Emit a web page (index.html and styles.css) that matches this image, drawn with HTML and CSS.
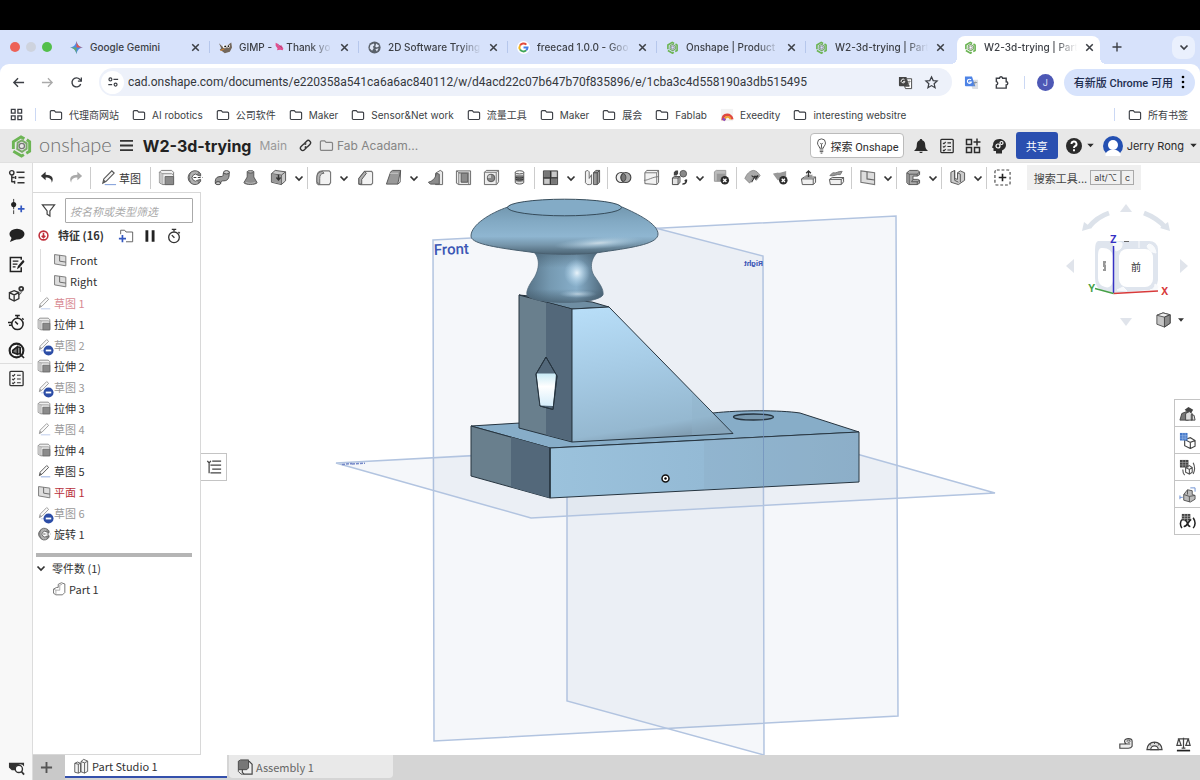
FILE: index.html
```html
<!DOCTYPE html>
<html lang="zh-CN">
<head>
<meta charset="utf-8">
<title>W2-3d-trying | Part Studio 1</title>
<link rel="stylesheet" href="styles.css">
</head>
<body>
<svg class="sprite" aria-hidden="true">
  <symbol id="close" viewBox="0 0 12 12"><path d="M3 3l6 6M9 3l-6 6" stroke="currentColor" stroke-width="1.4" fill="none"/></symbol>
  <symbol id="chev" viewBox="0 0 12 12"><path d="M2.500 4.500L6 8l3.500-3.500" stroke="currentColor" stroke-width="1.700" fill="none"/></symbol>
  <symbol id="caret" viewBox="0 0 12 12"><path d="M2.500 4h7L6 8z" fill="currentColor"/></symbol>
  <symbol id="folder" viewBox="0 0 16 16"><path d="M1.500 4.200a1.200 1.200 0 0 1 1.200-1.200h3.300l1.600 1.700h5.600a1.200 1.200 0 0 1 1.200 1.200v6a1.200 1.200 0 0 1-1.200 1.200H2.700a1.200 1.200 0 0 1-1.200-1.200z" fill="none" stroke="currentColor" stroke-width="1.300"/></symbol>
  <symbol id="onshape" viewBox="0 0 24 24"><path d="M3.500 15V7.500L11.500 2.500 15 4.500M17.500 5.500l3 2v10L17 19.500M14.500 21l-2.500 1.500-8.500-5" fill="none" stroke="#6cb554" stroke-width="3"/><path d="M8 8.500l4.500-2.300 4.800 3v5.600L12.500 18 7.500 15z" fill="none" stroke="#79aa68" stroke-width="2"/><circle cx="12.300" cy="12" r="2.800" fill="none" stroke="#777" stroke-width="1.300"/></symbol>
  <symbol id="extrude" viewBox="0 0 18 18"><path d="M1.500 3.500l2-2h11l2 2v13H5l-3.500-2z" fill="#f0f0f0" stroke="#777"/><path d="M1.500 3.500L5 5v11.500M5 5h9.500l2 1.500" fill="none" stroke="#888"/><path d="M1.500 4L5 5.500V16l-3.500-2z" fill="#c6c6c6"/><path d="M7.500 8H16.500v8.500h-9z" fill="#8b8b8b" stroke="#666"/></symbol>
  <symbol id="revolve" viewBox="0 0 18 18"><path d="M13.500 3A7.300 7.300 0 1 0 13.500 15.300L12.500 11.800a3.600 3.600 0 1 1 0-5.300z" fill="#b0b0b0" stroke="#555"/><path d="M5.500 3C2.500 7 3 12 6 15.500" fill="none" stroke="#666"/><path d="M13.500 3l2 2v2.500l-3-1M13.500 15.300l2-2.300v-2l-3 .8" stroke="#555" fill="#888"/><path d="M8 9h9.500" stroke="#333" stroke-dasharray="3 1.500"/></symbol>
  <symbol id="sweep" viewBox="0 0 18 18"><path d="M1.500 15.500c-1-7 3-7.500 6-7.500 2.500 0 2-1.500 2.500-4L16 3c.5 7-1.500 9.500-5.500 9.500-3 0-3 .5-3.500 3z" fill="#999" stroke="#444"/><ellipse cx="13.200" cy="3.500" rx="3" ry="1.800" fill="#ccc" stroke="#444"/><ellipse cx="4.300" cy="15" rx="2.700" ry="1.600" fill="#ccc" stroke="#444"/></symbol>
  <symbol id="loft" viewBox="0 0 18 18"><path d="M5.500 3v5.500L2 14.500c1.500 2.500 12.500 2.500 14 0l-3.500-6V3z" fill="#8e8e8e" stroke="#555"/><ellipse cx="9" cy="3" rx="3.500" ry="1.300" fill="#bbb" stroke="#555"/><path d="M4 14c3 1.500 7 1.500 10 0" stroke="#bbb" fill="none"/></symbol>
  <symbol id="thicken" viewBox="0 0 18 18"><path d="M1.500 5l4-3.500 11 1.500v9.500L12 16.500 1.500 14z" fill="#c9c9c9" stroke="#555"/><path d="M1.500 5l10.500 1.500L16.500 3M12 6.500v10" fill="none" stroke="#555"/><path d="M2 5.500l9.500 1.200v9L2 13.500z" fill="#999"/><path d="M9 6v5M6.800 9L9 11.500 11.200 9" stroke="#333" stroke-width="1.500" fill="none"/></symbol>
  <symbol id="fillet" viewBox="0 0 18 18"><path d="M2 15V9c0-5 2-7 6-7h7l1.500 1.500v11L15 16.500H3.500z" fill="#f2f2f2" stroke="#777" stroke-width="1.200"/><path d="M2 14V9c0-4 2-6 6-6.500L9.500 4.500C6 4.500 5 7 5 10v6z" fill="#b5b5b5" stroke="#666"/></symbol>
  <symbol id="chamfer" viewBox="0 0 18 18"><path d="M2 16V10l6-7.500h7.500l1 1.500v11L15 16.500H4z" fill="#f2f2f2" stroke="#777" stroke-width="1.200"/><path d="M2 10l6-7.500 2 2L5 11v5H2z" fill="#b0b0b0" stroke="#555"/></symbol>
  <symbol id="draft" viewBox="0 0 18 18"><path d="M1.500 16L6 3l2-1.500h8.500l-3 14.500z" fill="#999" stroke="#555"/><path d="M13.500 16l2.500-2 .5-12.500" fill="none" stroke="#555"/><path d="M5 4.500h9" stroke="#ccc"/></symbol>
  <symbol id="rib" viewBox="0 0 18 18"><path d="M9 4.500l5-3 2.500 1.500v13.500H9z" fill="#e8e8e8" stroke="#666"/><path d="M1.500 14C7 12.500 9 9 10 4.500l3 1V16H3.500z" fill="#8c8c8c" stroke="#555"/></symbol>
  <symbol id="shell" viewBox="0 0 18 18"><path d="M1.500 2h15v14.500H4L1.500 15z" fill="#eaeaea" stroke="#666"/><path d="M6.500 4.500h7V14h-7z" fill="#8b8b8b" stroke="#555"/><path d="M4 4v12.500M6 4.500L4 4 2 2M4 4h10.500v12" stroke="#777" fill="none"/></symbol>
  <symbol id="hole" viewBox="0 0 18 18"><path d="M1.500 3.500l2-2h13v12l-2 3h-13z" fill="#ededed" stroke="#666"/><path d="M1.500 3.500h12.500v13M14 3.500l2.500-2" stroke="#777" fill="none"/><circle cx="8.500" cy="9.500" r="4" fill="#888" stroke="#555"/><path d="M8.500 9.500V6A3.500 3.500 0 0 0 5 9.500z" fill="#ccc"/></symbol>
  <symbol id="thread" viewBox="0 0 18 18"><path d="M4.500 3.500v11c1.500 2 7.500 2 9 0v-11z" fill="#ddd" stroke="#555"/><path d="M4.500 6.500h9v6c-2 1.500-7 1.500-9 0z" fill="#777"/><path d="M4.500 8.500c2 1.500 7 1.500 9 0M4.500 10.500c2 1.500 7 1.500 9 0" stroke="#333" fill="none"/><ellipse cx="9" cy="3.500" rx="4.500" ry="1.700" fill="#f4f4f4" stroke="#555"/></symbol>
  <symbol id="pattern" viewBox="0 0 18 18"><path d="M1.500 2h15v14.500h-15z" fill="#888" stroke="#444"/><path d="M2.500 3H8v5.500H2.500zM10.500 10.500h5v5h-5z" fill="#777"/><path d="M10.500 3h5v5.500h-5zM2.500 10.500H8v5H2.500z" fill="#c9c9c9"/><path d="M9 2v14.500M1.500 9.500h15" stroke="#333" stroke-width="1.300"/></symbol>
  <symbol id="mirror" viewBox="0 0 18 18"><path d="M1.500 2.500l2.500-1 1.500 1.500v7l2.500-4v10l-2 .5H3.500l-2-2z" fill="#f0f0f0" stroke="#666"/><path d="M16.500 1.500h-4L10 4v12.500h4l2.500-2.500z" fill="#999" stroke="#555"/><path d="M10 4h4v12.500M14 4l2.500-2.500" fill="none" stroke="#444"/></symbol>
  <symbol id="boolean" viewBox="0 0 18 18"><circle cx="6.500" cy="9" r="5.300" fill="#eee" stroke="#444" stroke-width="1.200"/><circle cx="11.500" cy="9" r="5.300" fill="#aaa" stroke="#444" stroke-width="1.200"/><path d="M9 4.500a5.300 5.300 0 0 1 0 9 5.300 5.300 0 0 1 0-9z" fill="#777" stroke="#444"/></symbol>
  <symbol id="split" viewBox="0 0 18 18"><path d="M2 4l2-2.500h12.500V14l-2 2.500L2 15.500z" fill="#f2f2f2" stroke="#666"/><path d="M2 4h12.500v12.500M14.500 4l2-2.500M1 12c5 0 8-3.500 16-4" fill="none" stroke="#777"/></symbol>
  <symbol id="transform" viewBox="0 0 18 18"><path d="M1.500 9.500l2-1.500h6v6l-2 2.500h-6z" fill="#e2e2e2" stroke="#444"/><path d="M1.500 9.500h6v7M7.500 9.500l2-1.500" stroke="#444" fill="none"/><path d="M3 7V3.500L5 1.500h2.500V5L6 7z" fill="#444"/><circle cx="13" cy="5" r="3.500" fill="#888" stroke="#555"/><path d="M12 16c3 0 4.500-2 4.500-4.500M14.500 13l2-2" stroke="#333" stroke-width="1.500" fill="none"/></symbol>
  <symbol id="delpart" viewBox="0 0 18 18"><path d="M1.500 3l2-1.500h10V12l-2 1H1.500z" fill="#bbb" stroke="#999"/><path d="M4 5h9v8H4z" fill="#999"/><circle cx="12.500" cy="12" r="4.500" fill="#2d2d2d"/><path d="M10.800 10.300l3.400 3.400m0-3.400l-3.400 3.400" stroke="#fff" stroke-width="1.400"/></symbol>
  <symbol id="modfillet" viewBox="0 0 18 18"><path d="M1 10C3 5 6 2 10 1.500c3 .5 5 2 7 5.500l-4 5-3-4-4 7z" fill="#aaa" stroke="#888"/><path d="M8 7l3 2 4-2-3 4M8 14l4-7" stroke="#333" fill="none" stroke-width="1.200"/></symbol>
  <symbol id="delface" viewBox="0 0 18 18"><path d="M1 5c4-2 7 0 14-3v9L6 12z" fill="#999"/><circle cx="12" cy="12" r="4.500" fill="#2d2d2d"/><path d="M10.300 10.300l3.400 3.400m0-3.400l-3.400 3.400" stroke="#fff" stroke-width="1.400"/></symbol>
  <symbol id="moveface" viewBox="0 0 18 18"><path d="M1.500 10.500l3-2h12v5.500L14 16.500H2.500z" fill="#f0f0f0" stroke="#555"/><path d="M2 10.500h12v6M14 10.500l2.500-2" fill="none" stroke="#555"/><path d="M4 9.500L6.500 6h7L12 9.500z" fill="#999"/><path d="M9 8.500V2M6.500 4.500L9 2l2.500 2.500" stroke="#333" stroke-width="1.400" fill="none"/></symbol>
  <symbol id="offsetface" viewBox="0 0 18 18"><path d="M1.500 11l3-2h12v4.500L14 16.500H2.500z" fill="#f0f0f0" stroke="#555"/><path d="M2 11h12v5.500M14 11l2.500-2" fill="none" stroke="#555"/><path d="M2 7l3-3c4 1 6-2 10-1.500L13 6C9 5 7 8 2 7z" fill="#999" stroke="#777"/></symbol>
  <symbol id="plane" viewBox="0 0 18 18"><path d="M2 2l14.500 2v12.500L2 14z" fill="#ddd" stroke="#777" stroke-width="1.200"/><path d="M8.500 3v7.500l8 1.200" fill="none" stroke="#666" stroke-width="1.200"/></symbol>
  <symbol id="frame" viewBox="0 0 18 18"><path d="M3 4l3-2.500h8.500l2 1.500v3L14 7.500H9.500v3.500h5l2 1v3L14 16.500H5l-2-2z" fill="#aaa" stroke="#555"/><path d="M3 4l2.500 1.500H14l2.500-2.500M5.500 5.500v11M14 5.500v2M14 13.500v3M14 13.500l2.500-1.500M9.500 11L8 13.500h6" fill="none" stroke="#555"/></symbol>
  <symbol id="sheet" viewBox="0 0 18 18"><path d="M2 3.500l4-2V10l3 1V4l3-2 4.500 2v8L10 16.500 2 14z" fill="#ccc" stroke="#555"/><path d="M9 4l3 1.500V14M6 1.500V12l4 2" fill="none" stroke="#555"/></symbol>
  <symbol id="custom" viewBox="0 0 18 18"><rect x="1" y="1" width="16" height="16" rx="2" fill="none" stroke="#444" stroke-width="1.200" stroke-dasharray="3 2"/><path d="M9 5v8M5 9h8" stroke="#222" stroke-width="1.700"/></symbol>
  <symbol id="pencil" viewBox="0 0 18 18"><path d="M3 15l1-4.500L12.500 2l2.500 2.300L6.500 13z" fill="#f7f7f7" stroke="#555" stroke-width="1.200"/><path d="M3 15l1.200-3.500L6 13z" fill="#555"/><path d="M5 16.500h12" stroke="#8ca7dd" stroke-width="1.200"/></symbol>
  <symbol id="minus" viewBox="0 0 12 12"><circle cx="6" cy="6" r="5.500" fill="#2c4da6"/><path d="M3 6h6" stroke="#fff" stroke-width="2"/></symbol>
  <symbol id="check" viewBox="0 0 18 18"><rect x="2" y="1.500" width="14" height="15" rx="1" fill="none" stroke="currentColor" stroke-width="1.400"/><path d="M4.500 5.500l1 1 2-2M4.500 9.500l1 1 2-2M4.500 13.500l1 1 2-2M9.500 5.500h4M9.500 9.500h4M9.500 13.500h4" stroke="currentColor" stroke-width="1.200" fill="none"/></symbol>
  <symbol id="stop" viewBox="0 0 18 18"><circle cx="9" cy="10.500" r="6" fill="none" stroke="currentColor" stroke-width="1.500"/><path d="M9 4V1.500M6.500 1.500h5M6.500 8l3 3M14 4.500l1.500 1.500" stroke="currentColor" stroke-width="1.500"/></symbol>
</svg>

<div class="screen-edge"></div>
<header class="browser">
  <div class="tabstrip">
    <div class="lights"><i class="red"></i><i class="idle"></i><i class="green"></i></div>
    <nav class="tabs">
      <div class="tab"><svg class="fav" viewBox="0 0 16 16"><path d="M8 0c.8 4.800 3.200 7.200 8 8-4.800.8-7.200 3.200-8 8-.8-4.800-3.200-7.200-8-8 4.800-.8 7.200-3.200 8-8z" fill="#4b8bea"/><path d="M8 0c.8 4.800 3.200 7.200 8 8H8z" fill="#e4574a"/><path d="M0 8h8v8C7.200 11.200 4.800 8.800 0 8z" fill="#67a96a"/></svg><span class="label whole">Google Gemini</span><button aria-label="关闭"><svg><use href="#close"/></svg></button></div>
      <div class="tab"><svg class="fav" viewBox="0 0 18 16"><path d="M0 2l5 5 5-1 7-5 1 7-3 6-7 2-4-3-3-2 2-2z" fill="#73675b"/><circle cx="8" cy="6.500" r="2.600" fill="#fff"/><circle cx="13" cy="6" r="2.300" fill="#fff"/><circle cx="8.500" cy="6.500" r="1.200"/><circle cx="13" cy="6" r="1.200"/><path d="M2 12l5-2" stroke="#d0802f" stroke-width="1.500"/></svg><span class="label">GIMP - <svg class="emo" viewBox="0 0 14 14"><path d="M1 1l4 2 1 3 4-1 3 5-1 3-4-1-5 1 1-3-3-4z" fill="#e0508f"/><path d="M5 4l6 5" stroke="#8b3370"/></svg> Thank yo</span><button aria-label="关闭"><svg><use href="#close"/></svg></button></div>
      <div class="tab"><svg class="fav" viewBox="0 0 16 16"><circle cx="8" cy="8" r="7.500" fill="#59606a"/><path d="M3 5l4-2 1 2-2 2 1 2-2 3-3-3zM10 3l4 3-3 2-2-1zM9 10l4-1-2 4z" fill="#dfe6f5"/></svg><span class="label">2D Software Trying</span><button aria-label="关闭"><svg><use href="#close"/></svg></button></div>
      <div class="tab"><svg class="fav" viewBox="0 0 16 16"><circle cx="8" cy="8" r="8" fill="#fff"/><g fill="none" stroke-width="2.400"><path d="M11.500 4.500A5 5 0 0 0 3.700 5.500" stroke="#e24a3b"/><path d="M3.700 5.500a5 5 0 0 0 0 5" stroke="#f3b71c"/><path d="M3.700 10.500a5 5 0 0 0 7.600 1" stroke="#3fa557"/><path d="M11.300 11.500A5 5 0 0 0 13 8H8" stroke="#4880e8"/></g></svg><span class="label">freecad 1.0.0 - Goo</span><button aria-label="关闭"><svg><use href="#close"/></svg></button></div>
      <div class="tab"><svg class="fav"><use href="#onshape"/></svg><span class="label">Onshape | Product</span><button aria-label="关闭"><svg><use href="#close"/></svg></button></div>
      <div class="tab"><svg class="fav"><use href="#onshape"/></svg><span class="label">W2-3d-trying | Part</span><button aria-label="关闭"><svg><use href="#close"/></svg></button></div>
      <div class="tab active"><svg class="fav"><use href="#onshape"/></svg><span class="label">W2-3d-trying | Part</span><button aria-label="关闭"><svg><use href="#close"/></svg></button></div>
    </nav>
    <button class="newtab" aria-label="新标签页"><svg viewBox="0 0 12 12"><path d="M6 1.500v9M1.500 6h9" stroke="currentColor" stroke-width="1.400"/></svg></button>
    <button class="tabmenu" aria-label="标签页列表"><svg><use href="#chev"/></svg></button>
  </div>

  <div class="navbar">
    <button class="nav" aria-label="返回"><svg viewBox="0 0 14 14"><path d="M13 7H2M6.500 2.500L2 7l4.500 4.500" stroke="currentColor" stroke-width="1.500" fill="none"/></svg></button>
    <button class="nav off" aria-label="前进"><svg viewBox="0 0 14 14"><path d="M1 7h11M7.500 2.500L12 7l-4.500 4.500" stroke="currentColor" stroke-width="1.400" fill="none"/></svg></button>
    <button class="nav" aria-label="重新加载"><svg viewBox="0 0 14 14"><path d="M11.500 8.500A4.800 4.800 0 1 1 10.500 3.600L12 5" stroke="currentColor" stroke-width="1.500" fill="none"/><path d="M12.200 1.500v4H8.500" stroke="currentColor" stroke-width="1.400" fill="none"/></svg></button>
    <div class="omnibox">
      <button class="site" aria-label="网站信息"><svg viewBox="0 0 14 14"><g stroke="currentColor" stroke-width="1.400" fill="none"><circle cx="4" cy="4" r="1.700"/><path d="M7.500 4H13M1.500 10H6"/><circle cx="10" cy="10" r="1.700"/></g></svg></button>
      <input class="url" type="text" aria-label="地址" value="cad.onshape.com/documents/e220358a541ca6a6ac840112/w/d4acd22c07b647b70f835896/e/1cba3c4d558190a3db515495">
      <button aria-label="翻译"><svg viewBox="0 0 16 16"><path d="M1 2h8l3 10H2a1 1 0 0 1-1-1z" fill="#444"/><path d="M9 4h5.500v10.500H8L7 12h5z" fill="#fff" stroke="#444"/><path d="M10.500 7h3M12 6v1c0 2-1 3-2 4" stroke="#888" fill="none"/><path d="M7 5.200a2 2 0 1 0 .3 1.800H5.500" stroke="#fff" fill="none"/></svg></button>
      <button aria-label="收藏"><svg viewBox="0 0 16 16"><path d="M8 2l1.800 4 4.200.4-3.200 2.900 1 4.200L8 11.300 4.200 13.500l1-4.200L2 6.400 6.200 6z" fill="none" stroke="currentColor" stroke-width="1.300"/></svg></button>
    </div>
    <button class="ext" aria-label="Google 翻译"><svg viewBox="0 0 16 16"><path d="M6 5h9v10H9z" fill="#dcdfe4"/><path d="M1 1.500h7.500L12 12H2a1 1 0 0 1-1-1z" fill="#4d83e6"/><path d="M7.500 5.200a2.200 2.200 0 1 0 .4 2.300H5.500" stroke="#fff" stroke-width="1.200" fill="none"/><path d="M10 8h4M12 7c0 2-1 3.500-2.500 4.500" stroke="#8b949e" fill="none"/></svg></button>
    <button class="ext" aria-label="扩展程序"><svg viewBox="0 0 16 16"><path d="M2.500 3.500h3.300a1.700 1.700 0 1 1 3.400 0H13v3.700a1.700 1.700 0 1 1 0 3.400v3.400H2.500v-3.300a1.900 1.900 0 0 0 0-3.700z" fill="none" stroke="currentColor" stroke-width="1.500"/></svg></button>
    <i class="vsep"></i>
    <button class="avatar">J</button>
    <button class="update">有新版 Chrome 可用<svg viewBox="0 0 4 14"><circle cx="2" cy="2" r="1.300"/><circle cx="2" cy="7" r="1.300"/><circle cx="2" cy="12" r="1.300"/></svg></button>
  </div>

  <nav class="bookmarks">
    <svg class="apps" viewBox="0 0 14 14"><path d="M1.500 1.500h4v4h-4zM8.500 1.500h4v4h-4zM1.500 8.500h4v4h-4zM8.500 8.500h4v4h-4z" fill="none" stroke="currentColor" stroke-width="1.400"/></svg>
    <i class="vsep"></i>
    <a href="#"><svg><use href="#folder"/></svg>代理商网站</a>
    <a href="#"><svg><use href="#folder"/></svg>AI robotics</a>
    <a href="#"><svg><use href="#folder"/></svg>公司软件</a>
    <a href="#"><svg><use href="#folder"/></svg>Maker</a>
    <a href="#"><svg><use href="#folder"/></svg>Sensor&amp;Net work</a>
    <a href="#"><svg><use href="#folder"/></svg>流量工具</a>
    <a href="#"><svg><use href="#folder"/></svg>Maker</a>
    <a href="#"><svg><use href="#folder"/></svg>展会</a>
    <a href="#"><svg><use href="#folder"/></svg>Fablab</a>
    <a href="#"><svg viewBox="0 0 16 16"><rect x="1" y="1" width="14" height="14" fill="#f2f2f2"/><path d="M3 14c0-8 10-8 11-1" stroke="#e0483e" stroke-width="3" fill="none"/><path d="M5.500 14c0-5 5.500-5 6.500-1" stroke="#f0a030" stroke-width="2" fill="none"/><path d="M3 12l3 2" stroke="#8b4bc0" stroke-width="3"/></svg>Exeedity</a>
    <a href="#"><svg><use href="#folder"/></svg>interesting websitre</a>
    <i class="vsep last"></i>
    <a href="#"><svg><use href="#folder"/></svg>所有书签</a>
  </nav>
</header>

<header class="apphead">
  <svg class="logo"><use href="#onshape"/></svg>
  <span class="wordmark">onshape</span>
  <button class="burger" aria-label="菜单"><svg viewBox="0 0 14 14"><path d="M0 2h14M0 7h14M0 12h14" stroke="currentColor" stroke-width="2"/></svg></button>
  <h1>W2-3d-trying</h1>
  <span class="branch">Main</span>
  <button class="link" aria-label="链接"><svg viewBox="0 0 14 14"><g fill="none" stroke="currentColor" stroke-width="1.500"><path d="M6 4.500l2.200-2.200a2.400 2.400 0 0 1 3.500 3.500L9.500 8a2.400 2.400 0 0 1-3.300.2"/><path d="M8 9.500l-2.200 2.200a2.400 2.400 0 0 1-3.500-3.500L4.500 6a2.400 2.400 0 0 1 3.300-.2"/></g></svg></button>
  <a class="crumb" href="#"><svg><use href="#folder"/></svg>Fab Acadam...</a>
  <div class="account">
    <button class="explore"><svg viewBox="0 0 12 18"><path d="M4 11.500C4 9.500 1.500 8.500 1.500 5.500a4.500 4.500 0 0 1 9 0c0 3-2.500 4-2.500 6zM4 13.500h4M4 15.300h4M5 17h2M4.500 5.500L6 7l1.500-1.500M6 7v4" fill="none" stroke="#444"/></svg>探索 Onshape</button>
    <button aria-label="通知"><svg viewBox="0 0 16 16"><path d="M8 1c-1 0-1.300.7-1.300 1.300C4.500 3 3.800 4.800 3.800 7c0 3-1 4.500-2.800 6h14c-1.800-1.500-2.800-3-2.800-6 0-2.200-.7-4-2.900-4.700C9.300 1.700 9 1 8 1zM6.200 13.800c.3 1.600 3.300 1.600 3.600 0z" fill="currentColor"/></svg></button>
    <button aria-label="任务"><svg><use href="#check"/></svg></button>
    <button aria-label="应用"><svg viewBox="0 0 16 16"><path d="M1.500 1.500h5v5h-5zM1.500 9.500h5v5h-5zM9.500 9.500h5v5h-5zM12 .5v7M8.500 4h7" fill="none" stroke="currentColor" stroke-width="1.500"/></svg></button>
    <button aria-label="学习"><svg viewBox="0 0 16 16"><path d="M8.500 1C4 1 2 4 2.200 6.500L1 9.500l1.500.7V13H5v2.500h6V12.500c2.500-1 4-3 4-5.500 0-3.500-3-6-6.500-6z" fill="currentColor"/><circle cx="7" cy="8" r="2" fill="none" stroke="#fff" stroke-width="1.200"/><circle cx="10.500" cy="5" r="1.500" fill="none" stroke="#fff" stroke-width="1.200"/></svg></button>
    <button class="share">共享</button>
    <button class="help" aria-label="帮助"><svg viewBox="0 0 16 16"><circle cx="8" cy="8" r="8" fill="currentColor"/><path d="M5.500 6a2.500 2.500 0 1 1 3.600 2.200C8.200 8.700 8 9 8 10M8 11.300v2" stroke="#fff" stroke-width="1.900" fill="none"/></svg><svg class="car"><use href="#caret"/></svg></button>
    <button class="user"><svg viewBox="0 0 20 20"><circle cx="10" cy="10" r="10" fill="#2450b2"/><circle cx="10" cy="9" r="5" fill="#fff"/><path d="M2.500 18c1-3 4-4.500 7.500-4.500s6.500 1.500 7.500 4.500V20h-15z" fill="#fff"/></svg>Jerry Rong<svg class="car"><use href="#caret"/></svg></button>
  </div>
</header>

<div class="workspace">
  <nav class="rail">
    <button aria-label="特征列表"><svg viewBox="0 0 18 18"><g fill="none" stroke="currentColor" stroke-width="1.500"><circle cx="4" cy="4" r="2.300"/><path d="M4 6.500V14M4 9h3M7 13.500H4M9 3.500h8.500M11 9h6.500M10 14.500h7.500M8 7.500v3M7 12.500v3"/></g></svg></button>
    <button aria-label="插入"><svg viewBox="0 0 18 18"><path d="M6 1v16" stroke="#333" stroke-dasharray="5 1"/><circle cx="6" cy="7" r="2.700" fill="#222"/><path d="M14 8v7M10.500 11.500h7" stroke="#3458c0" stroke-width="1.800"/></svg></button>
    <button aria-label="评论"><svg viewBox="0 0 18 18"><ellipse cx="9.500" cy="7.500" rx="8" ry="5.700" fill="#222"/><path d="M4 11l-2 5 7-3z" fill="#222"/></svg></button>
    <button aria-label="笔记"><svg viewBox="0 0 18 18"><path d="M14 4V1.500H2.500v15H14V12" fill="none" stroke="#222" stroke-width="1.600"/><path d="M5 5.500h6M5 8.500h5M5 11.500h3" stroke="#222" stroke-width="1.300" fill="none"/><path d="M9.500 14l1-3.500L16 4l1.500 2-5.500 6.500z" fill="#222"/></svg></button>
    <button aria-label="零件"><svg viewBox="0 0 18 18"><path d="M1.500 8l5-2 5 2v6.500l-5 2.500-5-2.500zM1.500 8l5 2.500 5-2.500M6.500 10.500V17" fill="none" stroke="#333" stroke-width="1.400"/><circle cx="14" cy="4" r="3" fill="#333"/><path d="M14 7c0 2-1 3-3 3M13 3h2" stroke="#333" fill="none"/><circle cx="14" cy="4" r="1" fill="#fff"/></svg></button>
    <button aria-label="历史"><svg viewBox="0 0 18 18"><circle cx="10" cy="10.500" r="6" fill="none" stroke="#222" stroke-width="1.600"/><path d="M10 4V1.500M7.500 1.500h5M7.500 8l3 3M15 4.500L16.500 6M0 9h4M1 12h3" stroke="#222" stroke-width="1.600"/></svg></button>
    <button class="ruled" aria-label="渲染"><svg viewBox="0 0 18 18"><circle cx="9" cy="9" r="7.300" fill="#fff" stroke="#222" stroke-width="2.200"/><path d="M5 9l5-4v8l-5-2zM11 5l2 1v6l-2 1M13 13l4 4" stroke="#222" stroke-width="1.700" fill="#777"/></svg></button>
    <button aria-label="清单"><svg class="dark"><use href="#check"/></svg></button>
    <button class="bottom" aria-label="搜索标签"><svg viewBox="0 0 18 18"><path d="M1 4h16v4a5 5 0 0 0-9 4H4L1 9z" fill="#333"/><circle cx="11.500" cy="10.500" r="3.800" fill="#fff" stroke="#333" stroke-width="1.500"/><path d="M14 13l3 3.500" stroke="#333" stroke-width="1.900"/></svg></button>
  </nav>

  <div class="studio">
    <div class="tools">
      <button aria-label="撤消"><svg viewBox="0 0 18 18"><path d="M7 3L2 7.500 7 12V9c4 0 6.500 1.500 6.500 5.500C16.500 9 13 6 7 6z" fill="#333"/></svg></button>
      <button aria-label="重做"><svg viewBox="0 0 18 18"><path d="M11 3l5 4.500L11 12V9c-4 0-6.500 1.500-6.500 5.500C1.500 9 5 6 11 6z" fill="#aaa"/></svg></button>
      <i></i>
      <button class="sketch"><svg><use href="#pencil"/></svg>草图</button>
      <i></i>
      <button aria-label="拉伸"><svg><use href="#extrude"/></svg></button>
      <button aria-label="旋转"><svg><use href="#revolve"/></svg></button>
      <button aria-label="扫描"><svg><use href="#sweep"/></svg></button>
      <button aria-label="放样"><svg><use href="#loft"/></svg></button>
      <button aria-label="加厚"><svg><use href="#thicken"/></svg></button>
      <button class="more" aria-label="更多"><svg><use href="#chev"/></svg></button>
      <i></i>
      <button aria-label="圆角"><svg><use href="#fillet"/></svg></button>
      <button class="more" aria-label="更多"><svg><use href="#chev"/></svg></button>
      <button aria-label="倒角"><svg><use href="#chamfer"/></svg></button>
      <button aria-label="拔模"><svg><use href="#draft"/></svg></button>
      <button class="more" aria-label="更多"><svg><use href="#chev"/></svg></button>
      <button aria-label="筋"><svg><use href="#rib"/></svg></button>
      <button aria-label="抽壳"><svg><use href="#shell"/></svg></button>
      <button aria-label="孔"><svg><use href="#hole"/></svg></button>
      <button aria-label="螺纹"><svg><use href="#thread"/></svg></button>
      <i></i>
      <button aria-label="阵列"><svg><use href="#pattern"/></svg></button>
      <button class="more" aria-label="更多"><svg><use href="#chev"/></svg></button>
      <button aria-label="镜像"><svg><use href="#mirror"/></svg></button>
      <i></i>
      <button aria-label="布尔"><svg><use href="#boolean"/></svg></button>
      <button aria-label="分割"><svg><use href="#split"/></svg></button>
      <button aria-label="变换"><svg><use href="#transform"/></svg></button>
      <button class="more" aria-label="更多"><svg><use href="#chev"/></svg></button>
      <button aria-label="删除零件"><svg><use href="#delpart"/></svg></button>
      <i></i>
      <button aria-label="修改圆角"><svg><use href="#modfillet"/></svg></button>
      <button aria-label="删除面"><svg><use href="#delface"/></svg></button>
      <button aria-label="移动面"><svg><use href="#moveface"/></svg></button>
      <button aria-label="替换面"><svg><use href="#offsetface"/></svg></button>
      <i></i>
      <button aria-label="平面"><svg><use href="#plane"/></svg></button>
      <button class="more" aria-label="更多"><svg><use href="#chev"/></svg></button>
      <i></i>
      <button aria-label="框架"><svg><use href="#frame"/></svg></button>
      <button class="more" aria-label="更多"><svg><use href="#chev"/></svg></button>
      <i></i>
      <button aria-label="钣金"><svg><use href="#sheet"/></svg></button>
      <button class="more" aria-label="更多"><svg><use href="#chev"/></svg></button>
      <i></i>
      <button aria-label="自定义特征"><svg><use href="#custom"/></svg></button>
      <button class="toolsearch">搜索工具...<kbd>alt/⌥</kbd><kbd>c</kbd></button>
    </div>

    <div class="stage">
      <aside class="panel">
        <div class="filter">
          <svg viewBox="0 0 16 16"><path d="M1.500 2h13L9.500 8.500V14L6.500 12V8.500z" fill="none" stroke="#444" stroke-width="1.300"/></svg>
          <input type="text" placeholder="按名称或类型筛选" aria-label="按名称或类型筛选">
        </div>
        <div class="features-head">
          <svg viewBox="0 0 12 12"><circle cx="6" cy="6" r="4.800" fill="#fff" stroke="#c0303c" stroke-width="1.700"/><path d="M6 3v5M4 6.300l2 2 2-2" stroke="#c0303c" stroke-width="1.700" fill="none"/></svg>
          <h2>特征 (16)</h2>
          <button aria-label="新建文件夹"><svg viewBox="0 0 18 18"><path d="M3 7V2.500h4.500l1.500 2h7.500v11H9" fill="none" stroke="#555"/><path d="M5 8v8M1 12h8" stroke="#3458c0" stroke-width="1.900"/></svg></button>
          <button aria-label="暂停"><svg viewBox="0 0 18 18"><path d="M5.500 2.500v13M12.500 2.500v13" stroke="#222" stroke-width="3.200"/></svg></button>
          <button aria-label="计时"><svg class="dark"><use href="#stop"/></svg></button>
        </div>
        <ul class="planes">
          <li><svg><use href="#plane"/></svg>Front</li>
          <li><svg><use href="#plane"/></svg>Right</li>
        </ul>
        <ul class="features">
          <li class="dim bad"><svg><use href="#pencil"/></svg>草图 1</li>
          <li><svg><use href="#extrude"/></svg>拉伸 1</li>
          <li class="dim"><span class="held"><svg><use href="#pencil"/></svg><svg class="badge"><use href="#minus"/></svg></span>草图 2</li>
          <li><svg><use href="#extrude"/></svg>拉伸 2</li>
          <li class="dim"><span class="held"><svg><use href="#pencil"/></svg><svg class="badge"><use href="#minus"/></svg></span>草图 3</li>
          <li><svg><use href="#extrude"/></svg>拉伸 3</li>
          <li class="dim"><svg><use href="#pencil"/></svg>草图 4</li>
          <li><svg><use href="#extrude"/></svg>拉伸 4</li>
          <li><svg><use href="#pencil"/></svg>草图 5</li>
          <li class="bad"><svg><use href="#plane"/></svg>平面 1</li>
          <li class="dim"><span class="held"><svg><use href="#pencil"/></svg><svg class="badge"><use href="#minus"/></svg></span>草图 6</li>
          <li><svg><use href="#revolve"/></svg>旋转 1</li>
        </ul>
        <div class="rollback"></div>
        <button class="parts-head"><svg><use href="#chev"/></svg>零件数 (1)</button>
        <ul class="parts">
          <li><svg viewBox="0 0 18 18"><path d="M2 9l4-2h2V3l4-2 4.500 1.500v11l-3 3H5l-3-2z" fill="#fff" stroke="#555"/><path d="M2 9l3 1.500h5V4l3-1M5 10.500v6" fill="none" stroke="#999"/></svg>Part 1</li>
        </ul>
      </aside>

      <main class="view">
        <svg class="scene" viewBox="201 192 999 563" preserveAspectRatio="xMinYMin meet">
          <defs>
            <linearGradient id="gFace" x1=".2" y1="0" x2=".4" y2="1"><stop offset="0" stop-color="#b7ddf7"/><stop offset=".45" stop-color="#a6cbe5"/><stop offset=".9" stop-color="#95b8d0"/><stop offset="1" stop-color="#829fb4"/></linearGradient>
            <linearGradient id="gBase" x1="0" y1="0" x2="1" y2="0"><stop offset="0" stop-color="#9bc2dc"/><stop offset=".5" stop-color="#94bad5"/><stop offset="1" stop-color="#8eb1cb"/></linearGradient>
            <linearGradient id="gCap" x1="0" y1="0" x2="0" y2="1"><stop offset="0" stop-color="#7398b0"/><stop offset=".3" stop-color="#82a9c3"/><stop offset=".62" stop-color="#8fb6d1"/><stop offset=".8" stop-color="#7696ab"/><stop offset="1" stop-color="#4b6374"/></linearGradient>
            <linearGradient id="gNeck" x1="0" y1="0" x2="1" y2="0"><stop offset="0" stop-color="#587488"/><stop offset=".3" stop-color="#7599b1"/><stop offset=".65" stop-color="#88afca"/><stop offset="1" stop-color="#4f697c"/></linearGradient>
            <linearGradient id="gShade" x1="0" y1="0" x2="0" y2="1"><stop offset="0" stop-color="#3e5463" stop-opacity=".6"/><stop offset=".35" stop-color="#3e5463" stop-opacity="0"/><stop offset=".75" stop-color="#3e5463" stop-opacity="0"/><stop offset="1" stop-color="#3e5463" stop-opacity=".7"/></linearGradient>
            <radialGradient id="gGlow"><stop offset="0" stop-color="#f4fbff"/><stop offset=".35" stop-color="#d4ebfa" stop-opacity=".7"/><stop offset="1" stop-color="#b5daf2" stop-opacity="0"/></radialGradient>
            <linearGradient id="gHole" x1="0" y1="0" x2="0" y2="1"><stop offset="0" stop-color="#c8eaf5"/><stop offset=".4" stop-color="#fff"/><stop offset="1" stop-color="#d5edfa"/></linearGradient>
          </defs>
          <g fill="#93a8cc" fill-opacity=".09" stroke="#b2c4e0" stroke-width="1.500">
            <path d="M433 240L896 216 898 716 434 741z"/>
            <path d="M567 205L763 256 764 755 567 701z"/>
            <path d="M336 463L531 518 995 493 800 438z"/>
          </g>
          <path d="M342 464.500l10-1M352 464l13-.8" stroke="#7588c8" stroke-width="1.500" stroke-dasharray="3 1"/>
          <text class="plane-name" x="434" y="255" transform="rotate(-2 434 255)">Front</text>
          <text class="plane-side" transform="translate(763 266) scale(-1 1)">Right</text>

          <g stroke="#26343f" stroke-linejoin="round">
            <path d="M471 426L520 423 713 413C740 410 780 410 800 413L859 432 550 448z" fill="#87adc8"/>
            <path d="M471 426L550 448V498L471 476z" fill="#697f8d"/>
            <path d="M511 437L550 448V498L511 487z" fill="#53687a" stroke="none"/>
            <path d="M550 448L859 432V482L550 498z" fill="url(#gBase)"/>
            <path d="M704 440L858 432.500V481L704 489.500z" fill="#86a8c1" fill-opacity=".25" stroke="none"/>
            <ellipse cx="753.500" cy="417" rx="20" ry="3" fill="#7898ae" stroke-width="1.300"/>
            <path d="M519 295L592 302 609 307 572 309z" fill="#6f8ea3"/>
            <path d="M519 295L572 309V442L519 428z" fill="#697f8d"/>
            <path d="M546 302.500L571.500 309.500V441L546 435z" fill="#53687a" stroke="none"/>
            <path d="M572 309L609 307 733 433.500 572 442z" fill="url(#gFace)"/>
            <path d="M692 392L732 433 692 435z" fill="#8fb1c9" fill-opacity=".35" stroke="none"/>
            <path d="M546 357L557 376 553 409.500 540 406 536 374z" fill="#53687a"/>
            <path d="M536.500 373.500h19.500L553 406l-13-.5z" fill="url(#gHole)" stroke="none"/>
            <path d="M546 357L557 376 553 409.500 540 406 536 374z" fill="none"/>
            <path d="M550 448V498" stroke-width="1.500"/>
          </g>
          <g>
            <path d="M530 249C542 256 539 270 534 278 529 285 526 291 527 295 533 305 597 305 603 295 604 289 599 283 595 277 589 269 590 256 602 249z" fill="url(#gNeck)"/>
            <path d="M530 249C542 256 539 270 534 278 529 285 526 291 527 295 533 305 597 305 603 295 604 289 599 283 595 277 589 269 590 256 602 249z" fill="url(#gShade)" stroke="#536b7c" stroke-width=".8"/>
            <ellipse cx="577" cy="273" rx="13" ry="14" fill="url(#gGlow)" opacity=".9"/>
            <ellipse cx="578" cy="294" rx="19" ry="4" fill="url(#gGlow)" opacity=".55"/>
            <path d="M508 207C490 213 471 225 471 236 471 243 490 247 530 252 545 255 587 255 602 252 638 247 658 243 658 234 658 224 638 214 622 207z" fill="url(#gCap)" stroke="#4a6070"/>
            <ellipse cx="599" cy="243" rx="45" ry="6" fill="url(#gGlow)" opacity=".65" transform="rotate(-4 599 243)"/>
            <ellipse cx="564.500" cy="207.500" rx="57" ry="8.300" fill="#83abc6" stroke="#364c5b"/>
          </g>
          <path d="M763.500 410V488" stroke="#6d8fbb" stroke-opacity=".7"/>
          <circle cx="665.500" cy="478.500" r="3.500" fill="#fff" stroke="#111" stroke-width="1.500"/><circle cx="665.500" cy="478.500" r="1.200"/>
        </svg>

        <button class="flyout" aria-label="展开列表"><svg viewBox="0 0 18 18"><path d="M3.500 5v11M1.500 2l2 2.500L5.500 2M7 2.500h10M5 7h12M7 11.500h10M5 15.500h12" fill="none" stroke="#444" stroke-width="1.400"/></svg></button>

        <div class="cube">
          <svg viewBox="1064 200 126 130">
            <g fill="#e0e4eb"><path d="M1120 212h12l-6-8zM1120 318h12l-6 8zM1074 259v14l-8-7zM1180 259v14l8-7z"/></g>
            <g fill="none" stroke="#dce2ea" stroke-width="5"><path d="M1109 213q-12 4-20 14M1144 213q13 5 21 14"/></g>
            <path d="M1082 231l2-9 8 6zM1170 231l-2-9-8 6z" fill="#dce2ea"/>
            <path d="M1098 241h51q8 0 9 8v31q-1 10-9 10l-34 3-14-3q-6-3-6-12v-28q0-8 3-9z" fill="#dfe5ee"/>
            <rect x="1119" y="249" width="34" height="38" rx="8" fill="#fff"/>
            <path d="M1101 248q10-1 12 8v25q-2 8-8 6-7-2-7-9v-23q0-6 3-7z" fill="#fff"/>
            <path d="M1113 243q5-2 9 0 1 6-6 8zM1149 244q6 1 7 9-7-1-9-7zM1139 241v7M1117 290l6-3 4 4zM1150 290q5-1 5-6l3 2q0 5-4 6z" fill="#f8fafc" stroke="#fafbfd"/>
            <path d="M1124 241.500h5" stroke="#666"/>
            <text class="face" x="1131" y="271">前</text>
            <path d="M1103 262h3M1103 264h2.500M1103 266h3M1104 268h2M1103 270h3" stroke="#333"/>
            <path d="M1113.500 246V293" stroke="#3531c4" stroke-width="1.500"/>
            <path d="M1113.500 293.500L1158 291" stroke="#d83a3a" stroke-width="1.300"/>
            <path d="M1113.500 293.500L1095 288.500" stroke="#46a046" stroke-width="1.300"/>
            <text class="axis z" x="1110" y="243">Z</text><text class="axis x" x="1161" y="295">X</text><text class="axis y" x="1088" y="292">Y</text>
          </svg>
          <button class="shade-mode" aria-label="显示模式"><svg viewBox="0 0 18 18"><path d="M2 4.500L8.500 2 16 4v9l-6 4-8-3z" fill="#c4c4c4" stroke="#555"/><path d="M2 4.500L10 6.500 16 4 8.500 2z" fill="#eee" stroke="#555"/><path d="M10 6.500L16 4v9l-6 4z" fill="#8c8c8c" stroke="#444"/></svg><svg class="car"><use href="#caret"/></svg></button>
        </div>

        <nav class="sidebar">
          <button aria-label="外观"><svg viewBox="0 0 18 18"><path d="M6 5l4-3 5 3-3 5z" fill="#444"/><path d="M1 16l2-7 5-2 2 9z" fill="#777" stroke="#444"/><path d="M7 16V9l4-2 3 2v7zM13 16V10l3 1 1 5z" fill="#ddd" stroke="#444"/></svg></button>
          <button aria-label="配置"><svg viewBox="0 0 18 18"><path d="M6 8l6-2 5 3v6l-5 2.500-6-3zM6 8l6 3 5-2M12 11v6" fill="#fff" stroke="#444" stroke-width="1.200"/><path d="M1 1h8v8H1z" fill="#4377c9"/><path d="M1 4h8M1 6.500h8M4 1v8M6.500 1v8" stroke="#a7c2ec" stroke-width=".6"/></svg></button>
          <button aria-label="配置变量"><svg viewBox="0 0 18 18"><path d="M1 1h9v8H1z" fill="#444"/><path d="M1 3.700h9M1 6.300h9M4 1v8M7 1v8" stroke="#aaa" stroke-width=".6"/><path d="M7 9l4-2 3 2v5l-3 2-4-2zM7 9l4 2 3-2M11 11v5M4 11q0 4 2 6M15 4q3 6 0 12" fill="none" stroke="#555" stroke-width="1.200"/></svg></button>
          <button aria-label="命名位置"><svg viewBox="0 0 18 18"><path d="M5 9l4-5 5 1v4l3 1v4l-5 3-7-2z" fill="#bbb" stroke="#555"/><path d="M5 9l6 2v6M11 11l6-1M9 4v5" fill="none" stroke="#555"/><path d="M1 12h3M1 10v4M12 2h5v4" stroke="#6a8dd0" fill="none"/></svg></button>
          <button aria-label="变量表"><svg viewBox="0 0 18 18"><path d="M3 1h9v7H3z" fill="#444"/><path d="M3 3.500h9M3 5.800h9M6 1v7M9 1v7" stroke="#bbb" stroke-width=".6"/><path d="M3 7q-3 4 0 9M15 5q4 6 0 11" fill="none" stroke="#222" stroke-width="1.600"/><path d="M6 8c4-1 2 7 6 6M13 7c-3 0-4 8-8 7" fill="none" stroke="#222" stroke-width="1.800"/></svg></button>
        </nav>

        <div class="measure">
          <svg viewBox="0 0 18 18"><path d="M8 6.500C8 3 16 3 16 6.500V12q-1 2-4 2H3V9.500h7q-2-1-2-3z" fill="#eee" stroke="#444" stroke-width="1.200"/><path d="M10 6.500c1-1.500 4-1.500 4 0s-3 1.500-3 .5M10 9.500h4" fill="none" stroke="#444"/></svg>
          <svg viewBox="0 0 18 18"><path d="M1 15.500a8 8 0 0 1 16 0z" fill="#ddd" stroke="#444" stroke-width="1.300"/><path d="M5 15.500a4 4 0 0 1 8 0z" fill="#fff" stroke="#444" stroke-width="1.300"/><path d="M9 7.500v2M4 10l1.500 1M14 10l-1.500 1" stroke="#444"/></svg>
          <svg viewBox="0 0 18 18"><path d="M9 3v11M3 4h12M4 4l-2 7h4.500L4 4M14 4l-2.500 7H16L14 4M7 14h4" fill="none" stroke="#444" stroke-width="1.300"/><path d="M2 16.500h14" stroke="#222" stroke-width="1.800"/></svg>
        </div>
      </main>
    </div>

    <footer class="doc-tabs">
      <button class="add" aria-label="添加"><svg viewBox="0 0 14 14"><path d="M7 1v12M1 7h12" stroke="#555" stroke-width="2"/></svg></button>
      <button class="doc current"><svg viewBox="0 0 18 18"><path d="M2 6l3-1.500L8.500 6v10L6 17l-4-1zM2 6l4 1v10M6 7l2.500-1M9 4l3-2.500 4.500 2V15L13 17l-4-1.500zM9 4l4 1.500V17M13 5.500l3.500-2" fill="#f4f4f4" stroke="#555"/></svg>Part Studio 1</button>
      <button class="doc"><svg viewBox="0 0 18 18"><path d="M6 3h8l3 3v11H8l-2-2z" fill="#eee" stroke="#444" stroke-width="1.300"/><path d="M1.500 2.500L4 1h9v9l-2 2H1.500z" fill="#777" stroke="#444"/><path d="M1.500 12v2l3 3H8" fill="none" stroke="#444"/></svg>Assembly 1</button>
    </footer>
  </div>
</div>
</body>
</html>
```
FILE: styles.css
```css
* { box-sizing: border-box; }
body {
  margin: 0;
  min-height: 100vh;
  display: flex;
  flex-direction: column;
  background: #fff;
  color: #333;
  font-family: Inter, "Noto Sans CJK SC", sans-serif;
  font-size: 11px;
}
button { margin: 0; padding: 0; border: 0; background: none; color: inherit; font: inherit; display: flex; align-items: center; justify-content: center; flex: none; white-space: nowrap; }
a { color: inherit; text-decoration: none; }
ul { margin: 0; padding: 0; list-style: none; }
h1, h2 { margin: 0; }
svg { display: block; flex: none; }
.sprite { position: absolute; width: 0; height: 0; }
.screen-edge { height: 30px; background: #000; }

/* browser chrome */
.browser { background: #d7e2fb; color: #3c3f45; }
.tabstrip { display: flex; align-items: center; height: 34px; }
.lights { display: flex; gap: 6px; padding-left: 10px; width: 61px; flex: none; }
.lights i { width: 10px; height: 10px; border-radius: 50%; }
.red { background: #ed6258; }
.idle { background: #ced3de; }
.green { background: #53bf4b; }
.tabs { display: flex; align-self: stretch; }
.tab { position: relative; display: flex; align-items: center; width: 149px; padding: 0 7px 0 9px; font-weight: 500; font-size: 10px; }
.tab > * { position: relative; z-index: 1; }
.tab:not(:nth-last-child(-n+2)) { background: linear-gradient(#b6c7ec, #b6c7ec) right center / 1px 12px no-repeat; }
.fav { width: 13px; height: 13px; }
.label { flex: 1; min-width: 0; margin: 0 1px 0 7px; white-space: nowrap; line-height: 16px; mask-image: linear-gradient(to right, #000 74%, transparent 97%); }
.whole { mask-image: none; }
.emo { display: inline-block; width: 9px; height: 9px; }
.tab button { width: 16px; height: 16px; }
.tab button svg { width: 13px; height: 13px; }
.tab.active::before { content: ""; position: absolute; z-index: 0; inset: 6px 4px 0 2px; background: #fff; border-radius: 8px 8px 0 0; }
.tab.active::after { content: ""; position: absolute; z-index: 0; left: -4px; right: -2px; bottom: 0; height: 6px; background: radial-gradient(circle at 0 0, transparent 6px, #fff 6px) left / 6px 6px no-repeat, radial-gradient(circle at 100% 0, transparent 6px, #fff 6px) right / 6px 6px no-repeat; }
.newtab { width: 26px; height: 26px; }
.newtab svg { width: 12px; height: 12px; }
.tabmenu { width: 23px; height: 23px; margin: 0 5px 0 auto; border-radius: 8px; background: #eaf0fd; }
.tabmenu svg { width: 12px; height: 12px; }

.navbar { display: flex; align-items: center; height: 36px; padding: 0 5px 0 4px; background: #fff; border-radius: 9px 9px 0 0; }
.nav { width: 29px; height: 28px; }
.nav svg { width: 13px; height: 13px; }
.off { color: #aaa; }
.omnibox { flex: 1; display: flex; align-items: center; height: 28px; margin: 0 5px 0 8px; padding: 0 7px 0 2px; border-radius: 14px; background: #edf1fa; }
.site { width: 23px; height: 23px; border-radius: 50%; background: #fff; }
.site svg { width: 12px; height: 12px; }
.url { flex: 1; min-width: 0; margin-left: 4px; padding: 0; border: 0; background: none; color: #34373c; font: 12px Roboto, sans-serif; }
.omnibox button:not(.site) { width: 26px; }
.omnibox button:not(.site) svg { width: 15px; height: 15px; }
.ext { width: 30px; }
.ext svg { width: 15px; height: 15px; }
.vsep { flex: none; width: 1px; height: 13px; background: #cbd8f4; }
.navbar .vsep { margin: 0 12px 0 7px; }
.avatar { width: 17px; height: 17px; border-radius: 50%; background: #4d58b5; color: #dfe3fa; font-size: 9px; }
.update { gap: 8px; height: 27px; margin-left: 10px; padding: 0 10px; border-radius: 14px; background: #d7e3fc; color: #1e2d4e; font-family: Roboto, "Noto Sans CJK SC", sans-serif; font-weight: 500; }
.update svg { width: 4px; height: 14px; }

.bookmarks { display: flex; align-items: center; gap: 13px; height: 29px; padding: 0 12px 0 10px; background: #fff; font-size: 10px; white-space: nowrap; }
.bookmarks a { display: flex; align-items: center; gap: 6px; }
.bookmarks a svg { width: 14px; height: 14px; }
.bookmarks .apps { width: 13px; height: 13px; }
.bookmarks .apps + .vsep { margin: 0 0 0 -1px; }
.last { margin-left: auto; }

/* application header */
.apphead { display: flex; align-items: center; height: 34px; padding: 0 1px 0 10px; background: #e8e8e8; border-bottom: 1px solid #e0e0e0; white-space: nowrap; }
.logo { width: 23px; height: 24px; }
.wordmark { margin: 0 0 4px 6px; color: #6f6f6f; font: 300 20px/24px Lato, sans-serif; }
.burger { margin-left: 8px; }
.burger svg { width: 13px; height: 13px; }
h1 { margin-left: 10px; color: #222; font-size: 16px; font-weight: 700; line-height: 28px; }
.branch { margin-left: 8px; color: #999; font-size: 12px; }
.link { width: 14px; margin: 0 7px 0 11px; }
.link svg { width: 13px; height: 13px; }
.crumb { display: flex; align-items: center; gap: 3px; color: #858585; font-size: 12px; }
.crumb svg { width: 15px; height: 15px; }
.account { display: flex; align-items: center; margin-left: auto; color: #2b2b2b; }
.account > button { width: 26px; }
.account > button > svg { width: 16px; height: 16px; }
.account > .explore { gap: 4px; width: auto; height: 25px; margin-right: 4px; padding: 0 4px 0 5px; border: 1px solid #bbb; border-radius: 4px; background: #fff; font-family: Roboto, "Noto Sans CJK SC", sans-serif; }
.account > .explore svg { width: 11px; height: 16px; }
.account > .share { width: 42px; height: 27px; margin-left: 4px; border-radius: 3px; background: #2a4fb0; color: #fff; }
.account > .help { width: 38px; margin-left: 4px; gap: 3px; }
.account > button > .car { width: 11px; height: 11px; }
.account > .user { gap: 4px; width: auto; margin-left: 3px; }
.account > .user svg:first-child { width: 20px; height: 20px; }

/* workspace */
.workspace { flex: 1; display: flex; min-height: 0; font-family: "Noto Sans CJK SC", sans-serif; }
.rail { flex: none; width: 33px; display: flex; flex-direction: column; background: #f8f8f8; border-right: 1px solid #dcdcdc; }
.rail button { width: 32px; height: 29px; }
.rail svg { width: 17px; height: 17px; }
.rail .ruled { height: 27px; border-bottom: 1px solid #ddd; }
.rail .bottom { height: 25px; margin-top: auto; }
.dark { color: #333; }
.studio { flex: 1; min-width: 0; display: flex; flex-direction: column; }
.tools { display: flex; align-items: center; height: 29px; font-family: Inter, "Noto Sans CJK SC", sans-serif; }
.tools button { width: 28px; height: 28px; }
.tools button svg { width: 17px; height: 17px; }
.tools .more { width: 14px; color: #333; }
.tools .more svg { width: 12px; height: 12px; }
.tools > i { flex: none; width: 1px; height: 22px; margin: 0 1px; background: #ccc; }
.tools .sketch { gap: 2px; width: 57px; }
.tools .toolsearch { width: 114px; height: 25px; margin-left: 11px; background: #f0f0f0; color: #444; }
kbd { height: 15px; padding: 0 3px; border: 1px solid #aaa; font: 9px/13px Inter, "DejaVu Sans", sans-serif; }
kbd:first-of-type { margin-left: 3px; }

.stage { flex: 1; display: flex; min-height: 0; }
.panel { flex: none; width: 168px; border: 1px solid #d8d8d8; border-width: 1px 1px 1px 0; font-size: 11px; }
.filter { display: flex; align-items: center; gap: 9px; padding: 5px 7px 2px 8px; }
.filter svg { width: 15px; height: 15px; }
.filter input { flex: 1; min-width: 0; height: 25px; padding: 0 4px; border: 1px solid #aaa; border-radius: 1px; font: italic 11px "Noto Sans CJK SC", sans-serif; }
.filter input::placeholder { color: #aaa; }
.features-head { display: flex; align-items: center; height: 21px; margin-bottom: 3px; padding-left: 5px; }
.features-head > svg { width: 11px; height: 11px; }
.features-head h2 { width: 56px; margin-left: 9px; font-size: 11px; font-weight: 700; line-height: 21px; white-space: nowrap; }
.features-head button { width: 24px; }
.features-head button svg { width: 16px; height: 16px; }
.panel li { display: flex; align-items: center; gap: 3px; height: 21px; white-space: nowrap; }
.panel li svg { width: 14px; height: 14px; }
.planes { margin-left: 7px; padding: 0 0 1px 12px; border-left: 1px solid #ddd; }
.features { padding-left: 4px; }
.bad { color: #b8303c; }
.dim { color: #999; }
.dim > svg, .held > svg:first-child { opacity: .6; }
.dim.bad { color: #d88a92; }
.held { position: relative; width: 14px; height: 14px; }
.panel .badge { position: absolute; right: -3px; bottom: -4px; width: 11px; height: 11px; }
.rollback { height: 4px; margin: 9px 8px 0 3px; background: #b5b5b5; }
.parts-head { gap: 5px; height: 21px; padding-left: 2px; }
.parts-head svg { width: 12px; height: 12px; }
.parts { padding-left: 19px; }

.view { position: relative; flex: 1; min-width: 0; overflow: hidden; }
.scene { position: absolute; inset: 0; width: 100%; height: 100%; }
.plane-name { fill: #3c57b5; font: 500 15px Roboto, sans-serif; }
.plane-side { fill: #3c57b5; font: 700 8px "Liberation Sans Narrow", Roboto, sans-serif; }
.flyout { position: absolute; left: 0; top: 261px; width: 26px; height: 28px; border: 1px solid #c4c4c4; border-left: 0; background: #fff; }
.flyout svg { width: 16px; height: 16px; }
.cube { position: absolute; top: 8px; right: 10px; width: 126px; }
.cube > svg { width: 126px; height: 130px; }
.shade-mode { position: absolute; right: 4px; bottom: 2px; gap: 4px; color: #333; }
.shade-mode svg { width: 17px; height: 17px; }
.shade-mode .car { width: 10px; height: 10px; }
.face { font: 10px "Noto Sans CJK SC", sans-serif; fill: #333; }
.axis { font: 700 10px Inter, sans-serif; }
.x { fill: #d83a3a; }
.y { fill: #46a046; }
.z { fill: #3531c4; }
.sidebar { position: absolute; top: 207px; right: 0; border: 1px solid #c4c4c4; border-right: 0; background: #fff; }
.sidebar button { width: 25px; height: 26px; }
.sidebar button + button { height: 27px; border-top: 1px solid #c4c4c4; }
.sidebar svg { width: 17px; height: 17px; }
.measure { position: absolute; right: 8px; bottom: 3px; display: flex; gap: 12px; }
.measure svg { width: 17px; height: 17px; }

.doc-tabs { display: flex; height: 25px; background: #d5d5d5; font-size: 11px; }
.add { width: 32px; padding-right: 6px; background: #c9c9c9; }
.add svg { width: 13px; height: 13px; }
.doc { width: 164px; height: 23px; margin-left: 2px; padding-left: 8px; gap: 3px; justify-content: flex-start; background: #e9e9e9; border-radius: 0 0 4px 4px; color: #666; }
.doc svg { width: 16px; height: 16px; }
.doc.current { width: 162px; margin-left: 0; background: #fff; border-bottom: 2px solid #3450ac; border-radius: 0; color: #333; }
```
